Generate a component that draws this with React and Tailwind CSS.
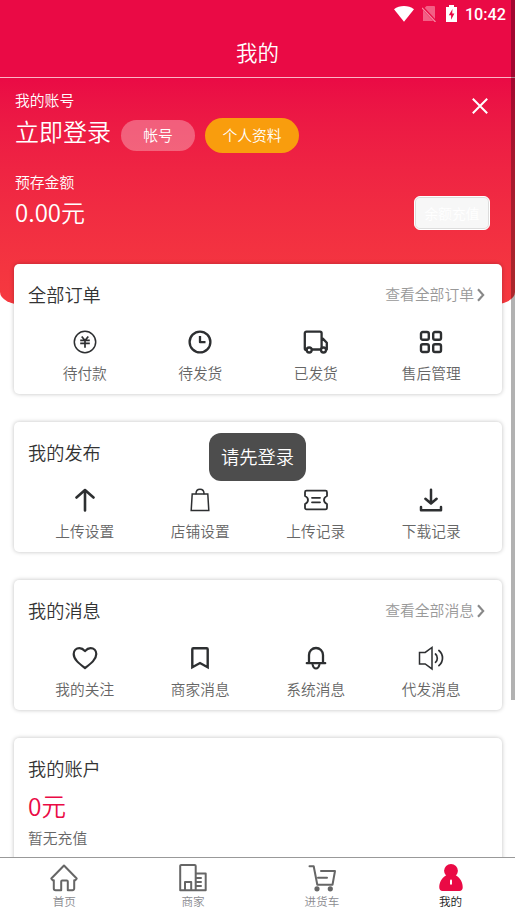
import React from 'react';

const ink = '#2d2f31';

function Icon({ children, w = 1.8 }) {
  return (
    <svg viewBox="0 0 26 26" className="size-[26px]" fill="none" stroke={ink} strokeWidth={w} strokeLinecap="round" strokeLinejoin="round">
      {children}
    </svg>
  );
}

const icons = {
  yen: (
    <Icon w={1.5}>
      <circle cx="13" cy="13" r="10.7" />
      <path strokeWidth="1.7" strokeLinecap="butt" d="M9.700 7.500L13 11.500l3.300-4M8.200 11.300h9.600M8.200 14.300h9.600M13 11.400V18.800" />
    </Icon>
  ),
  clock: (
    <Icon w={2.3}>
      <circle cx="13" cy="13" r="10.4" />
      <path strokeLinecap="butt" d="M13 7v6.200h5.500" />
    </Icon>
  ),
  truck: (
    <Icon w={2.3}>
      <path d="M4 21H3.400a1.600 1.600 0 0 1-1.600-1.600V4.200a1.600 1.600 0 0 1 1.600-1.600H17a1.600 1.600 0 0 1 1.600 1.600V21M8.500 20.500H18.600M18.600 9.600h1.200l4 4.200V20.500h-1" />
      <circle cx="6.200" cy="21" r="2.500" fill="#fff" />
      <circle cx="20.500" cy="21" r="2.500" fill="#fff" />
    </Icon>
  ),
  grid: (
    <Icon w={2.4}>
      <rect x="3" y="3" width="7.800" height="7.800" rx="1.800" />
      <rect x="15.200" y="3" width="7.800" height="7.800" rx="1.800" />
      <rect x="3" y="15.200" width="7.800" height="7.800" rx="1.800" />
      <rect x="15.200" y="15.200" width="7.800" height="7.800" rx="1.800" />
    </Icon>
  ),
  up: (
    <Icon w={2.6}>
      <path d="M13 3v20.500M4.500 10.500L13 3l8.500 7.500" />
    </Icon>
  ),
  bag: (
    <Icon w={1.5}>
      <path strokeLinejoin="miter" d="M5.200 7h15.600l1 16.500H4.200z" />
      <path d="M9 6.800c0-6 8-6 8 0" />
    </Icon>
  ),
  ticket: (
    <Icon w={1.8}>
      <path d="M3.500 3.700h19a1.500 1.500 0 0 1 1.500 1.500v3.800c-1.800.8-3 2.200-3 4s1.200 3.200 3 4v3.800a1.500 1.500 0 0 1-1.500 1.500h-19A1.500 1.500 0 0 1 2 20.800V17c1.800-.8 3-2.200 3-4S3.800 9.800 2 9V5.200a1.500 1.500 0 0 1 1.500-1.500zM9 10.800h8M9 15.300h8" />
    </Icon>
  ),
  download: (
    <Icon w={2.500}>
      <path d="M13 2.800v13M7.400 11.700L13 16.500l5.600-4.800M3 20v3.200h20V20" />
    </Icon>
  ),
  heart: (
    <Icon w={2.200}>
      <path d="M13 23C7 18.500 1.700 14.500 1.700 9c0-3.400 2.500-5.900 5.700-5.900 2.300 0 3.700.8 5.600 3 1.900-2.200 3.300-3 5.600-3 3.200 0 5.700 2.500 5.700 5.900 0 5.500-5.300 9.500-11.300 14z" />
    </Icon>
  ),
  bookmark: (
    <Icon w={2.400}>
      <path strokeLinejoin="miter" d="M5.300 22.200V4.200a1 1 0 0 1 1-1h13.400a1 1 0 0 1 1 1V22.200L13 18z" />
    </Icon>
  ),
  bell: (
    <Icon w={2.300}>
      <path d="M3.800 18.200h18.400M6 17.500v-7.500a7 7 0 0 1 14 0V17.500" />
      <path strokeWidth="2" d="M9.500 19.500c.6 2.600 1.800 3.900 3.500 3.900s2.900-1.300 3.500-3.900" />
    </Icon>
  ),
  speaker: (
    <Icon w={1.500}>
      <path strokeLinejoin="miter" d="M1.500 7.400h5.700l6.800-5v21.500l-6.800-5H1.500z" />
      <path strokeWidth="1.700" d="M17.500 9c2.400 2 2.400 6.300 0 8.300M20.900 5.500c4.800 4 4.800 11.200 0 15.200" />
    </Icon>
  ),
};

function Card({ title, more, items }) {
  return (
    <section className="h-[130px] shrink-0 rounded-[5px] bg-white px-[14px] shadow-[0_0_4px_rgba(0,0,0,0.25)]">
      <div className="flex h-[61px] items-center justify-between">
        <h2 className="text-[18.2px] text-[#333]">{title}</h2>
        {more && (
          <a className="flex items-center gap-[3px] pr-[3px] text-[14.8px] text-[#999]">
            {more}
            <svg viewBox="0 0 8 14" className="mt-px h-[14px] w-2" fill="none" stroke="#888" strokeWidth="2.1">
              <path d="M1 1.200l5.200 5.800L1 12.800" />
            </svg>
          </a>
        )}
      </div>
      <div className="-mx-px grid grid-cols-4">
        {items.map(([icon, label]) => (
          <div key={label} className="flex flex-col items-center pt-1">
            {icons[icon]}
            <span className="mt-1.5 text-[14.7px] leading-[23px] text-[#666]">{label}</span>
          </div>
        ))}
      </div>
    </section>
  );
}

function Tab({ label, active, children }) {
  return (
    <div className="flex flex-1 flex-col items-center pt-[5px]">
      <svg viewBox="0 0 30 30" className="size-[30px]" fill="none" stroke="#666" strokeWidth="2" strokeLinecap="round" strokeLinejoin="round">
        {children}
      </svg>
      <span className={active ? 'text-[11.6px] leading-4 text-[#222]' : 'text-[11.6px] leading-4 text-[#8a8a8f]'}>{label}</span>
    </div>
  );
}

export default function App() {
  return (
    <div className="relative flex h-[915px] w-[515px] flex-col overflow-hidden bg-white font-['Noto_Sans_CJK_SC',sans-serif] font-[350]">
      <header className="h-[78px] shrink-0 border-b border-[#fbb5c6] bg-[#ea0a45] text-white">
        <div className="flex h-7 items-center justify-end pr-[9px]">
          <svg viewBox="0 0 20 16" className="h-4 w-5" fill="#fff">
            <path d="M0 3.200C5.500-1 14.500-1 20 3.200L10 15.800z" />
          </svg>
          <svg viewBox="0 0 14 16" className="ml-[8px] h-4 w-[14px]">
            <path d="M4.500 0H12a1 1 0 0 1 1 1v14H1V3.500z" fill="#f35f85" />
            <path d="M0 1l14 15" stroke="#ea0a45" strokeWidth="2.800" />
            <path d="M0 2l13.500 14" stroke="#f58ba5" strokeWidth="1.200" />
          </svg>
          <svg viewBox="0 0 11 17" className="-mt-px ml-[10px] h-[17px] w-[11px]">
            <path d="M3 0h5v2h3v15H0V2h3z" fill="#fff" />
            <path d="M6.500 4L2.800 10.200h2.300v4.500L8.400 8.500H6.200z" fill="#ea0a45" />
          </svg>
          <span className="ml-[8px] mt-0.5 font-['Roboto',sans-serif] text-[16.2px] font-medium">10:42</span>
        </div>
        <h1 className="flex h-[49px] items-center justify-center text-[21.5px]">我的</h1>
      </header>

      <main className="min-h-0 flex-1 overflow-hidden">
        <div className="h-[227px] bg-linear-to-b from-[#ea0a45] to-[#f63a3f] px-[15px] pt-[11px] text-white [border-bottom-left-radius:24px_13px] [border-bottom-right-radius:24px_13px]">
          <div className="flex justify-between">
            <div>
              <p className="text-[14.8px] leading-[22px]">我的账号</p>
              <div className="mt-[6px] flex h-[36px] items-center">
                <span className="mt-[-9px] text-[24px] leading-[32px]">立即登录</span>
                <button className="ml-[10px] h-[31px] w-[74px] rounded-full bg-white/30 text-[14.8px]">帐号</button>
                <button className="ml-[10px] h-[35px] w-[94px] rounded-full bg-[#f99d0d] text-[14.8px]">个人资料</button>
              </div>
            </div>
            <svg viewBox="0 0 16 16" className="mr-[12px] mt-[9px] size-4" stroke="#fff" strokeWidth="2">
              <path d="M.8.8l14.400 14.400M15.200.8L.8 15.200" />
            </svg>
          </div>
          <div className="mt-[18px] flex items-start justify-between">
            <div>
              <p className="text-[14.8px] leading-[22px]">预存金额</p>
              <p className="mt-[3px] text-[24px] leading-[32px]">0.00元</p>
            </div>
            <button className="mr-[10px] mt-[25px] h-[34px] w-[76px] rounded-[6px] border border-white bg-[#f7f7f7] text-[13.700px] text-white shadow-[inset_0_0_0_1px_#ddd]">余额充值</button>
          </div>
        </div>

        <div className="relative ml-[14px] mr-[13px] -mt-[41px] flex flex-col gap-7">
          <Card title="全部订单" more="查看全部订单" items={[['yen', '待付款'], ['clock', '待发货'], ['truck', '已发货'], ['grid', '售后管理']]} />
          <Card title="我的发布" items={[['up', '上传设置'], ['bag', '店铺设置'], ['ticket', '上传记录'], ['download', '下载记录']]} />
          <Card title="我的消息" more="查看全部消息" items={[['heart', '我的关注'], ['bookmark', '商家消息'], ['bell', '系统消息'], ['speaker', '代发消息']]} />
          <section className="h-[150px] rounded-[5px] bg-white px-[14px] shadow-[0_0_4px_rgba(0,0,0,0.25)]">
            <h2 className="pt-[14px] text-[18.2px] leading-8 text-[#333]">我的账户</h2>
            <p className="mt-[5px] text-[24.500px] leading-[34px] text-[#ea0a45]">0元</p>
            <p className="mt-[4px] text-[14.8px] leading-[22px] text-[#666]">暂无充值</p>
          </section>
        </div>
      </main>

      <nav className="flex h-[58px] shrink-0 border-t border-[#999] bg-white">
        <Tab label="首页">
          <path d="M2.300 15.500L15 2.500l12.700 13-1.500 1.800h-1V25.500a1.800 1.800 0 0 1-1.800 1.800H18.800V18.500a1 1 0 0 0-1-1h-4.600a1 1 0 0 0-1 1v8.800H6.600A1.800 1.800 0 0 1 4.800 25.500v-8.200h-1z" />
        </Tab>
        <Tab label="商家">
          <path d="M2.200 27.300V3a1 1 0 0 1 1-1h13.500a1 1 0 0 1 1 1v24.300zM17.700 10.500h10v16.800h-10M7 27v-8h6.200v8M18.500 15h4.500M18.500 19h4.500M18.500 23h4.500" />
        </Tab>
        <Tab label="进货车">
          <path d="M2.500 3.300h4.200l3.600 18.400h15.200l2.500-13.700H14M11 14.700h9" />
          <circle cx="10" cy="25.800" r="1.600" fill="#666" />
          <circle cx="23.300" cy="25.800" r="1.600" fill="#666" />
        </Tab>
        <Tab label="我的" active>
          <g fill="#ea0a45" stroke="none">
            <circle cx="15" cy="7.800" r="6.900" />
            <path d="M10 12.500h10c4.500 2.500 7 7.500 6.700 12.300-.1 2-1.200 3.200-3.200 3.200h-17c-2 0-3.100-1.200-3.200-3.200C3 20 5.500 15 10 12.500z" />
          </g>
          <path stroke="#fff" d="M15 17.500v3.200" />
        </Tab>
      </nav>

      <div className="absolute left-[209px] top-[433px] flex h-12 w-[97px] items-center justify-center rounded-[12px] bg-[#4d4d4d] text-[18.300px] text-white">请先登录</div>
      <div className="absolute right-0 top-0 h-[700px] w-1 bg-black/30" />
    </div>
  );
}
